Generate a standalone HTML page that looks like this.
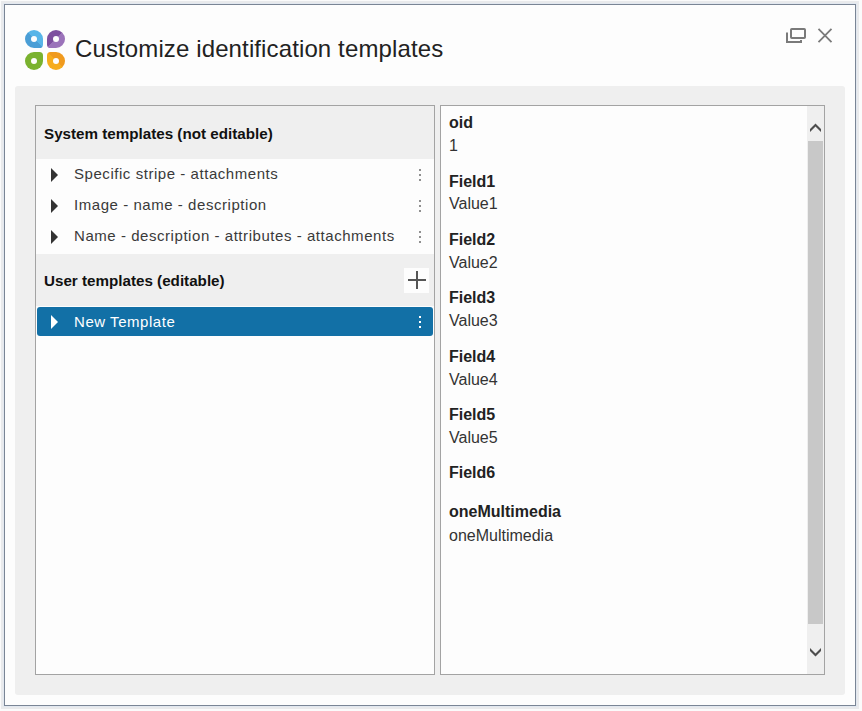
<!DOCTYPE html>
<html><head><meta charset="utf-8">
<style>
html,body{margin:0;padding:0;}
body{width:862px;height:711px;background:#fbfbfb;position:relative;overflow:hidden;font-family:"Liberation Sans",sans-serif;}
.abs{position:absolute;}
#dlg{position:absolute;left:4px;top:4px;width:852px;height:702px;box-sizing:border-box;border:1px solid #7a8595;background:#fdfdfd;box-shadow:0 0 0 1px #e2e8f0,0 0 0 3px #e9eaec;}
.petal{position:absolute;width:18px;height:18px;}
.hole{position:absolute;width:6.4px;height:6.4px;border-radius:50%;background:#fdfdfd;left:5.8px;top:5.8px;}
#title{position:absolute;left:75px;top:35px;font-size:24px;letter-spacing:0.12px;line-height:28px;color:#222;white-space:nowrap;}
#gray{position:absolute;left:15px;top:86px;width:830px;height:609px;background:#efefef;border-radius:3px;}
.panel{position:absolute;top:105px;height:570px;box-sizing:border-box;border:1px solid #a3a3a3;background:#fdfdfd;overflow:hidden;}
#lp{left:35px;width:400px;}
#rp{left:440px;width:385px;}
.hdr{position:absolute;left:0;width:398px;background:#efefef;}
.hdr span{position:absolute;left:8px;font-weight:bold;font-size:15.2px;color:#111;white-space:nowrap;}
.row{position:absolute;left:0;width:398px;height:31px;}
.row .tri{position:absolute;left:15px;top:9px;width:0;height:0;border-top:7px solid transparent;border-bottom:7px solid transparent;border-left:7px solid #333;}
.row .txt{position:absolute;left:38px;font-size:15px;letter-spacing:0.55px;color:#3a3a3a;white-space:nowrap;}
.row .dots{position:absolute;left:383px;top:10px;width:2px;height:12px;}
.row .dots i{position:absolute;left:0;width:2px;height:2px;background:#909090;}
.fld{position:absolute;left:8px;font-size:16px;color:#333;white-space:nowrap;line-height:18px;}
.fld.b{font-weight:bold;color:#222;}
</style></head><body>
<div id="dlg"></div>
<!-- logo -->
<div class="petal" style="left:25px;top:30px;border-radius:50% 50% 20% 50%;background:linear-gradient(45deg,#4a9ed6 50%,#58b5e8 50%);"><div class="hole"></div></div>
<div class="petal" style="left:47px;top:30px;border-radius:50% 50% 50% 20%;background:linear-gradient(-45deg,#9b73ba 50%,#7d4f9f 50%);"><div class="hole"></div></div>
<div class="petal" style="left:25px;top:52px;border-radius:50% 20% 50% 50%;background:#7ab22f;"><div class="hole"></div></div>
<div class="petal" style="left:47px;top:52px;border-radius:20% 50% 50% 50%;background:linear-gradient(45deg,#f6ac1c 50%,#f09a1e 50%);"><div class="hole"></div></div>
<div id="title">Customize identification templates</div>
<!-- restore / close -->
<svg class="abs" style="left:780px;top:20px" width="60" height="30" viewBox="0 0 60 30">
<rect x="11" y="9" width="14" height="9" rx="0.8" fill="none" stroke="#7a7a7a" stroke-width="2"/>
<path d="M7 12.5 V22 H21 V20" fill="none" stroke="#7a7a7a" stroke-width="2"/>
<path d="M38.5 8.8 L51.5 22.2 M51.5 8.8 L38.5 22.2" stroke="#7a7a7a" stroke-width="1.8"/>
</svg>
<div id="gray"></div>
<div id="lp" class="panel">
  <div class="hdr" style="top:0;height:53px;"><span style="top:19px;">System templates (not editable)</span></div>
  <div class="row" style="top:53px;"><div class="tri"></div><div class="txt" style="top:6px">Specific stripe - attachments</div><div class="dots"><i style="top:0"></i><i style="top:5px"></i><i style="top:10px"></i></div></div>
  <div class="row" style="top:84px;"><div class="tri"></div><div class="txt" style="top:6px">Image - name - description</div><div class="dots"><i style="top:0"></i><i style="top:5px"></i><i style="top:10px"></i></div></div>
  <div class="row" style="top:115px;"><div class="tri"></div><div class="txt" style="top:6px">Name - description - attributes - attachments</div><div class="dots"><i style="top:0"></i><i style="top:5px"></i><i style="top:10px"></i></div></div>
  <div class="hdr" style="top:148px;height:52px;"><span style="top:18px;">User templates (editable)</span>
    <div class="abs" style="left:368px;top:14px;width:25px;height:25px;background:#fdfdfd;">
      <div class="abs" style="left:4px;top:11px;width:18px;height:2px;background:#555;"></div>
      <div class="abs" style="left:12px;top:3px;width:2px;height:18px;background:#555;"></div>
    </div>
  </div>
  <div class="row" style="top:201px;left:1px;width:396px;height:29px;background:#1270a6;border-radius:3px;">
    <div class="tri" style="left:14px;top:8px;border-left-color:#fff;"></div><div class="txt" style="top:6px;left:37px;color:#fff">New Template</div>
    <div class="dots" style="left:382px;top:9px"><i style="top:0;background:#fff"></i><i style="top:5px;background:#fff"></i><i style="top:10px;background:#fff"></i></div>
  </div>
</div>
<div id="rp" class="panel">
  <div class="fld b" style="top:8px">oid</div>
  <div class="fld" style="top:31px">1</div>
  <div class="fld b" style="top:67px">Field1</div>
  <div class="fld" style="top:89px">Value1</div>
  <div class="fld b" style="top:125px">Field2</div>
  <div class="fld" style="top:148px">Value2</div>
  <div class="fld b" style="top:183px">Field3</div>
  <div class="fld" style="top:206px">Value3</div>
  <div class="fld b" style="top:242px">Field4</div>
  <div class="fld" style="top:265px">Value4</div>
  <div class="fld b" style="top:300px">Field5</div>
  <div class="fld" style="top:323px">Value5</div>
  <div class="fld b" style="top:358px">Field6</div>
  <div class="fld b" style="top:397px">oneMultimedia</div>
  <div class="fld" style="top:421px">oneMultimedia</div>
  <!-- scrollbar -->
  <div class="abs" style="left:366px;top:0;width:17px;height:568px;background:#efefef;">
    <svg class="abs" style="left:0;top:0" width="17" height="568">
      <path d="M3 23 L8.5 17.5 L14 23 L14 26 L8.5 20.5 L3 26 Z" fill="#4d4d4d"/>
      <rect x="1" y="35" width="15" height="483" fill="#c8c8c8"/>
      <path d="M3 542 L8.5 547.5 L14 542 L14 545 L8.5 550.5 L3 545 Z" fill="#4d4d4d"/>
    </svg>
  </div>
</div>
</body></html>
